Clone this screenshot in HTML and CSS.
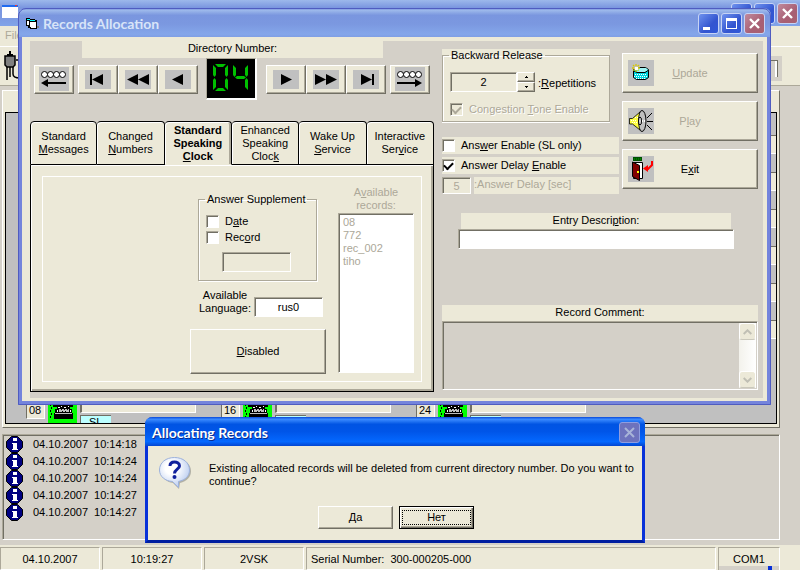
FILE: index.html
```html
<!DOCTYPE html>
<html lang="en">
<head>
<meta charset="utf-8">
<title>Records Allocation</title>
<link rel="stylesheet" href="styles.css">
</head>
<body>
<svg class="defs" aria-hidden="true">
  <defs>
    <symbol id="phone" viewBox="0 0 29 20">
      <path fill="#0f0" d="M0 0h29v20H0z"/>
      <path d="M7 0h15v2h3v2h-3v2h2v4h1v6H6v-6h1V6h2V4H5V2h2z"/>
      <path fill="#fff" d="M8 1h2v1H8zM12 0h1v2h-1zM15 0h1v2h-1zM19 1h2v1h-2zM10 4h2v1h-2zM13 3h1v1h-1zM16 4h2v1h-2zM20 3h1v1h-1zM9 7h1v2H9zM22 7h1v2h-1z"/>
      <path fill="#c0c0c0" d="M11 6h10v3H11zM7 10h17v1H7z"/>
      <path d="M13 6h1v1h-1zM16 6h1v1h-1zM19 6h1v1h-1zM14 8h1v1h-1zM17 8h1v1h-1zM2 1h1v2H2zM3 4h1v2H3zM2 7h1v2H2zM3 10h1v2H3zM2 13h1v2H2z"/>
    </symbol>
    <symbol id="info" viewBox="0 0 17 17">
      <path fill="#000080" stroke="#000" d="M5.500 .5h6l5 5v6l-5 5h-6l-5-5v-6z"/>
      <path fill="#fff" d="M7 2h4v3H7zM6 7h5v6h1v1H6v-1h1V8H6z"/>
    </symbol>
  </defs>
</svg>

<div class="desktop">
  <main class="app">
    <header class="app-title">
      <svg class="app-icon" width="16" height="14" viewBox="0 0 16 14"><path fill="#fff" d="M0 0h16v13H0z"/><path fill="#1f6bf0" d="M0 0h16v2H0z"/><path fill="#e33" d="M13 0h2v1h-2z"/></svg>
      <div class="caption-buttons">
        <button class="cap" aria-label="Minimize"></button>
        <button class="cap" aria-label="Restore"></button>
        <button class="cap close" aria-label="Close"><svg width="19" height="19" viewBox="0 0 19 19"><path stroke="#fff" stroke-width="2.400" d="M5 5l9 9M14 5l-9 9"/></svg></button>
      </div>
    </header>
    <nav class="menu"><a href="#">File</a></nav>
    <div class="toolbar">
      <svg width="18" height="32" viewBox="0 0 18 32"><path d="M7 1h2v3H7zM5 4h6v2H5z"/><path fill="#808080" stroke="#000" stroke-width="1.500" d="M3 6h10v9l-2 2H5l-2-2z"/><path fill="none" stroke="#000" stroke-width="1.500" d="M5 17v13M8 17v10M11 17v7c0 3 2 4 7 4M14 10h3v8"/></svg>
      <div class="tool-slot"></div>
    </div>
    <section class="board">
      <div class="board-inner">
        <div class="channels">
          <div class="channel"><span class="num">08</span><svg class="phone"><use href="#phone"/></svg><div class="lines"><i class="line"></i><b class="mode">SL</b></div></div>
          <div class="channel"><span class="num">16</span><svg class="phone"><use href="#phone"/></svg><div class="lines"><i class="line"></i><b class="mode"></b></div></div>
          <div class="channel"><span class="num">24</span><svg class="phone"><use href="#phone"/></svg><div class="lines"><i class="line"></i><b class="mode"></b></div></div>
        </div>
        <div class="slots"><i></i><i></i><i></i><i></i><i></i><i></i></div>
      </div>
    </section>
    <ul class="log">
      <li><svg><use href="#info"/></svg><span>04.10.2007</span><span>10:14:18</span></li>
      <li><svg><use href="#info"/></svg><span>04.10.2007</span><span>10:14:24</span></li>
      <li><svg><use href="#info"/></svg><span>04.10.2007</span><span>10:14:24</span></li>
      <li><svg><use href="#info"/></svg><span>04.10.2007</span><span>10:14:27</span></li>
      <li><svg><use href="#info"/></svg><span>04.10.2007</span><span>10:14:27</span></li>
    </ul>
    <footer class="status">
      <span>04.10.2007</span><span>10:19:27</span><span>2VSK</span>
      <span class="serial">Serial Number:&nbsp; 300-000205-000</span><span class="com">COM1</span>
    </footer>
  </main>

  <section class="window">
    <header class="win-title">
      <svg width="14" height="12" viewBox="0 0 14 12" shape-rendering="crispEdges"><path d="M0 0h4v1h5v1h2v9H4v-1H2V8H0z"/><path fill="#fff" d="M1 3h2v4H1zM4 4h6v6H5V9H4z"/><path fill="#0ff" d="M1 1h3v1H1zM4 2h5v1H4z"/><path fill="#808080" d="M11 8h2v2h-2z"/></svg>
      <h1>Records Allocation</h1>
      <div class="caption-buttons">
        <button class="cap" aria-label="Minimize"><svg width="19" height="19" viewBox="0 0 19 19"><path fill="#fff" d="M4 13h7v3H4z"/></svg></button>
        <button class="cap" aria-label="Maximize"><svg width="19" height="19" viewBox="0 0 19 19"><path fill="#fff" fill-rule="evenodd" d="M4 4h11v11H4zM5 7v7h9V7z"/></svg></button>
        <button class="cap close" aria-label="Close"><svg width="19" height="19" viewBox="0 0 19 19"><path stroke="#fff" stroke-width="2.400" d="M5 5l9 9M14 5l-9 9"/></svg></button>
      </div>
    </header>
    <div class="client">
      <div class="panel">
        <div class="left">
          <div class="dir-label">Directory Number:</div>
          <div class="nav">
            <button class="btn wide-ic" aria-label="Scroll back"><svg width="30" height="24" viewBox="0 0 30 24"><path fill="#c0c0c0" d="M0 0h30v24H0z"/><g fill="#fff" stroke="#000"><circle cx="5.500" cy="7.500" r="3"/><circle cx="11.500" cy="7.500" r="3"/><circle cx="17.500" cy="7.500" r="3"/><circle cx="23.500" cy="7.500" r="3"/></g><path d="M2 16l7-4v3h18v2H9v3z"/></svg></button>
            <div class="group">
              <button class="btn" aria-label="First"><svg width="26" height="19" viewBox="0 0 26 19"><path fill="#c0c0c0" d="M0 0h26v19H0z"/><path d="M5 4h2v11H5zM7 9.500L18 4v11z"/></svg></button>
              <button class="btn" aria-label="Fast back"><svg width="26" height="19" viewBox="0 0 26 19"><path fill="#c0c0c0" d="M0 0h26v19H0z"/><path d="M2 9.500L13 4v11zM13 9.500L24 4v11z"/></svg></button>
              <button class="btn" aria-label="Back"><svg width="26" height="19" viewBox="0 0 26 19"><path fill="#c0c0c0" d="M0 0h26v19H0z"/><path d="M7 9.500L18 4v11z"/></svg></button>
            </div>
            <div class="led" role="img" aria-label="04"><svg width="48" height="38" viewBox="0 0 48 38"><g fill="#00c000"><path d="M8 5h11l-3 3h-5zM6 6l3 3v7l-1.500 2L6 16zM21 6v10l-1.500 2-1.500-2V9zM6 21l1.500-2L9 21v7l-3 3zM21 21v10l-3-3v-7l1.500-2zM11 29h5l3 3H8zM26 6l3 3v7l-1.500 2-1.500-2zM41 6v10l-1.500 2-1.500-2V9zM30 17h7l2 1.500-2 1.500h-7l-2-1.500zM41 21v10l-3-3v-7l1.500-2z"/></g></svg></div>
            <div class="group">
              <button class="btn" aria-label="Forward"><svg width="26" height="19" viewBox="0 0 26 19"><path fill="#c0c0c0" d="M0 0h26v19H0z"/><path d="M19 9.500L8 4v11z"/></svg></button>
              <button class="btn" aria-label="Fast forward"><svg width="26" height="19" viewBox="0 0 26 19"><path fill="#c0c0c0" d="M0 0h26v19H0z"/><path d="M13 9.500L2 4v11zM24 9.500L13 4v11z"/></svg></button>
              <button class="btn" aria-label="Last"><svg width="26" height="19" viewBox="0 0 26 19"><path fill="#c0c0c0" d="M0 0h26v19H0z"/><path d="M19 4h2v11h-2zM19 9.500L8 4v11z"/></svg></button>
            </div>
            <button class="btn wide-ic" aria-label="Scroll forward"><svg width="30" height="24" viewBox="0 0 30 24"><path fill="#c0c0c0" d="M0 0h30v24H0z"/><g fill="#fff" stroke="#000"><circle cx="5.500" cy="7.500" r="3"/><circle cx="11.500" cy="7.500" r="3"/><circle cx="17.500" cy="7.500" r="3"/><circle cx="23.500" cy="7.500" r="3"/></g><path d="M27 16l-7-4v3H2v2h18v3z"/></svg></button>
          </div>
          <div class="tabs" role="tablist">
            <button class="tab" role="tab"><span>Standard<br><u>M</u>essages</span></button>
            <button class="tab" role="tab"><span>Changed<br><u>N</u>umbers</span></button>
            <button class="tab on" role="tab" aria-selected="true"><span>Standard<br>Speaking<br><u>C</u>lock</span></button>
            <button class="tab" role="tab"><span>Enhanced<br>Speaking<br>Cloc<u>k</u></span></button>
            <button class="tab" role="tab"><span>Wake Up<br><u>S</u>ervice</span></button>
            <button class="tab" role="tab"><span>Interactive<br>Ser<u>v</u>ice</span></button>
          </div>
          <div class="tab-body">
            <div class="tab-inner">
              <div class="supp-col">
                <fieldset class="supp">
                  <legend>Answer Supplement</legend>
                  <label class="check"><input type="checkbox"><span>D<u>a</u>te</span></label>
                  <label class="check"><input type="checkbox"><span>Rec<u>o</u>rd</span></label>
                  <input class="sunk off" type="text" aria-label="Record name" disabled>
                </fieldset>
                <div class="lang"><label for="lang">Available<br>Language:</label><input id="lang" class="sunk" type="text" value="rus0"></div>
                <button class="btn big"><span><u>D</u>isabled</span></button>
              </div>
              <div class="rec-col">
                <span class="rec-label" id="reclab">A<u>v</u>ailable<br>records:</span>
                <ul class="rec-list" aria-labelledby="reclab"><li>08</li><li>772</li><li>rec_002</li><li>tiho</li></ul>
              </div>
            </div>
          </div>
        </div>
        <div class="right">
          <div class="right-top">
            <div class="options">
              <div class="cream">
                <fieldset class="back">
                  <legend>Backward Release</legend>
                  <div class="rep"><input id="rep" class="sunk off" type="text" value="2"><div class="spin"><button class="btn" aria-label="Up"><svg width="5" height="3" viewBox="0 0 5 3"><path d="M2 0h1v1h1v1H1V1h1z"/></svg></button><button class="btn" aria-label="Down"><svg width="5" height="3" viewBox="0 0 5 3"><path d="M1 0h3v1H3v1H2V1H1z"/></svg></button></div><label for="rep">:<u>R</u>epetitions</label></div>
                  <label class="check dim"><input type="checkbox" checked disabled><span>Congestion <u>T</u>one Enable</span></label>
                </fieldset>
              </div>
              <div class="strips">
                <label class="check strip"><input type="checkbox"><span>Ans<u>w</u>er Enable (SL only)</span></label>
                <label class="check strip"><input type="checkbox" checked><span>Answer Delay <u>E</u>nable</span></label>
                <div class="delay"><input id="delay" class="sunk" type="text" value="5" disabled><label for="delay">:Answer Delay [sec]</label></div>
              </div>
            </div>
            <div class="actions">
              <button class="btn action" disabled><svg width="26" height="26" viewBox="0 0 26 26"><path fill="#c0c0c0" d="M0 0h26v26H0z"/><path fill="#00d8e0" stroke="#000" d="M5.500 9.500h3l3-2h6l3 2v8l-3 2h-9l-3-2z"/><path fill="#a0f4f4" d="M10 8h8l2 2-3 2H9z"/><path fill="none" stroke="#000" d="M6 11l3 1.500h8l3-2"/><path stroke="#fff" stroke-dasharray="1 1" d="M7 14.500h12M6 16.500h13M8 18.500h10"/><path stroke="#d8c800" stroke-width="1.300" stroke-dasharray="2 1" d="M8 4v9M4 8h9M5 5l6 6M11 5l-6 6"/><path fill="#fff" d="M7 7h3v3H7z"/></svg><span><u>U</u>pdate</span></button>
              <button class="btn action" disabled><svg width="26" height="26" viewBox="0 0 26 26"><path fill="#c0c0c0" d="M0 0h26v26H0z"/><ellipse cx="14" cy="13" rx="4" ry="10.500" fill="#c0c0c0" stroke="#000"/><path fill="#ffff40" stroke="#000" stroke-width=".8" d="M1.500 10.500h3L12 4c-2 5-2 12 0 18l-7.500-6h-3z"/><path stroke="#fff" stroke-dasharray="1 1" d="M3 12.500h6M4 14.500h6M7 9.500h4"/><ellipse cx="12" cy="13" rx="1.500" ry="4" fill="#ddd" stroke="#000"/><path stroke="#fff" stroke-width="2" stroke-dasharray="1 1" d="M14 13h4"/><path stroke="#000" d="M19 10l5-5M19 13.500h6M19 17l5 5"/></svg><span>P<u>l</u>ay</span></button>
              <button class="btn action"><svg width="26" height="26" viewBox="0 0 26 26"><path fill="#c0c0c0" d="M0 0h26v26H0z"/><path fill="#005000" d="M5 1h9v4H5z"/><path stroke="#00b000" stroke-dasharray="1 1" d="M6 3h7"/><path fill="#fff" stroke="#000" d="M5.500 6.500h9v16h-9z"/><path fill="#800000" stroke="#000" d="M4.500 6l7 3.500v15l-7-4z"/><path fill="#ff0" d="M9 15h2v2H9z"/><path fill="none" stroke="#f00" stroke-width="2" d="M24 5v4l-4 4h-2"/><path fill="#f00" d="M15 12.500l5-3.500v7z"/></svg><span>E<u>x</u>it</span></button>
            </div>
          </div>
          <div class="entry"><label for="entry">Entry Descri<u>p</u>tion:</label><input id="entry" class="sunk" type="text"></div>
          <div class="comment">
            <label for="comment">Record Comment:</label>
            <div class="comment-box">
              <textarea id="comment" disabled></textarea>
              <div class="scroll"><button disabled aria-label="Scroll up"><svg width="9" height="6" viewBox="0 0 9 6"><path fill="none" stroke="#c0bfb4" stroke-width="2" d="M.7 5L4.500 1.300 8.300 5"/></svg></button><button disabled aria-label="Scroll down"><svg width="9" height="6" viewBox="0 0 9 6"><path fill="none" stroke="#c0bfb4" stroke-width="2" d="M.7 1L4.500 4.700 8.300 1"/></svg></button></div>
            </div>
          </div>
        </div>
      </div>
    </div>
  </section>

  <section class="dialog" role="dialog" aria-labelledby="dlg">
    <header class="dlg-title"><h2 id="dlg">Allocating Records</h2><button class="cap gone" aria-label="Close" disabled><svg width="19" height="19" viewBox="0 0 19 19"><path stroke="#a9b4d8" stroke-width="2" d="M5 5l9 9M14 5l-9 9"/></svg></button></header>
    <div class="dlg-body">
      <div class="dlg-msg">
        <svg width="34" height="34" viewBox="0 0 34 34"><defs><radialGradient id="b" cx=".4" cy=".35" r=".7"><stop offset=".3" stop-color="#fff"/><stop offset="1" stop-color="#b4c8ee"/></radialGradient></defs><path fill="#8a8a84" opacity=".6" d="M18 3c9 0 15 5 15 12 0 6-4 10-11 12l-1 6-6-6C8 26 4 22 4 15 4 8 10 3 18 3z"/><path fill="url(#b)" stroke="#9db2dc" d="M16.500 1.500c8.500 0 15 5 15 12.500 0 6-4 10-11 11.500v6l-6-6C7 25 1.500 20.500 1.500 14c0-7.500 6.500-12.500 15-12.500z"/><path fill="none" stroke="#10209c" stroke-width="3" d="M12 10c0-3 2-4 4.500-4s5 1.300 5 4c0 3-5 3.500-5 7.500"/><circle cx="16.500" cy="21" r="2" fill="#10209c"/></svg>
        <p>Existing allocated records will be deleted from current directory number. Do you want to continue?</p>
      </div>
      <div class="dlg-buttons"><button class="btn">Да</button><button class="btn default"><span>Нет</span></button></div>
    </div>
  </section>
</div>
</body>
</html>
```
FILE: styles.css
```css
* { box-sizing: border-box; }
body, h1, h2, p, ul, fieldset { margin: 0; padding: 0; }
body, button, input, textarea {
  font: 11px/13px "Liberation Sans", sans-serif;
  color: #000;
}
ul { list-style: none; }
svg { display: block; flex: none; }
button { padding: 0; border: 0; background: none; }
u { text-underline-offset: 1px; }
.defs { position: absolute; width: 0; height: 0; }

.desktop { position: relative; min-height: 100vh; overflow: hidden; }

/* Main application behind */
.app { min-height: 100vh; display: flex; flex-direction: column; background: #d4d0c8; }
.app-title {
  height: 26px; padding: 3px 2px 0; display: flex; justify-content: space-between;
  background: linear-gradient(#9db9eb, #7a96df 30%, #7b98e2 60%, #82a4e8);
}
.app-icon { margin-top: 2px; }
.menu { height: 20px; padding: 3px 5px; background: #ece9d8; }
.menu a { color: #aca899; text-decoration: none; }
.toolbar {
  height: 40px; padding: 3px 18px 0 2px; display: flex; justify-content: space-between;
  background: #ece9d8; border-top: 1px solid #fff; border-bottom: 1px solid #aca899;
}
.tool-slot { width: 40px; height: 25px; margin-top: 6px; border: 4px solid #d4d0c8; background: #d4d0c8; box-shadow: inset -1px 1px #716f64, inset -3px 0 #fff; }
.board {
  flex: 1; margin: 4px 20px 6px 2px; padding: 21px 2px 3px 2px; display: flex;
  background: #ece9d8; border: 1px solid #fff; border-right-color: #716f64; border-bottom-color: #716f64;
}
.board-inner { flex: 1; display: flex; justify-content: space-between; border: 1px solid #000; background: #c0c0c0; overflow: hidden; }
.channels { display: flex; align-items: flex-end; padding-left: 20px; }
.channel { width: 195px; display: flex; align-items: flex-start; gap: 3px; }
.num { width: 19px; height: 16px; padding: 0 2px; background: #ece9d8; border: 1px solid #716f64; border-color: #c0c0c0 #fff #fff #716f64; }
.phone { width: 29px; height: 20px; }
.lines { display: flex; flex-direction: column; gap: 2px; }
.line { width: 116px; height: 10px; background: #ece9d8; border: 1px solid #fff; border-left: 2px solid #716f64; }
.mode { width: 31px; height: 8px; padding-left: 8px; overflow: hidden; font-weight: normal; background: #bff; border-top: 1px solid #716f64; border-left: 1px solid #716f64; }
.slots { width: 6px; padding-top: 22px; display: flex; flex-direction: column; gap: 18px; }
.slots i { height: 19px; background: #ece9d8; border-top: 1px solid #716f64; border-bottom: 1px solid #fff; }
.log {
  height: 106px; margin: 0 20px 5px 2px; padding: 1px 3px;
  border: 1px solid #aca899; border-color: #aca899 #fff #fff #aca899; box-shadow: inset 1px 1px #716f64;
}
.log li { height: 17px; display: flex; align-items: center; gap: 6px; }
.log svg { width: 17px; height: 17px; margin-right: 4px; }
.status { height: 25px; display: flex; gap: 2px; padding: 2px 20px 0 0; background: #ece9d8; }
.status span { width: 100px; padding-top: 5px; text-align: center; border: 1px solid #aca899; border-right-color: #fff; border-bottom-color: #fff; }
.status .serial { flex: 1; padding-left: 4px; text-align: left; }
.status .com {
  width: 62px; border-bottom: 0;
  background: linear-gradient(#0831d9, #0831d9) 49px 100% / 4px 4px no-repeat, linear-gradient(#d4d0c8, #d4d0c8) 0 100% / 100% 4px no-repeat;
}

/* Caption buttons */
.caption-buttons { display: flex; gap: 2px; }
.cap {
  width: 21px; height: 21px; border: 1px solid #c6d3f5; border-radius: 3px;
  background: linear-gradient(135deg, #6f92ee, #3355d0 60%, #2f58d8);
}
.close { background: linear-gradient(135deg, #c08a9c, #a85f74 60%, #a86070); }

/* Classic raised and sunken controls */
.btn {
  display: flex; align-items: center; justify-content: center; background: #ece9d8;
  border: 1px solid #fff; border-right-color: #716f64; border-bottom-color: #716f64;
  box-shadow: inset -1px -1px #aca899;
}
.sunk {
  height: 20px; padding: 0 2px; text-align: center; background: #fff; border: 1px solid #aca899;
  border-right-color: #fff; border-bottom-color: #fff; border-radius: 0; box-shadow: inset 1px 1px #716f64; outline: 0;
}
.off { background: #ece9d8; }
.sunk:disabled { color: #aca899; background: #ece9d8; }
.check { display: flex; align-items: center; gap: 6px; }
.check input {
  appearance: none; width: 13px; height: 13px; margin: 0; background: #fff;
  border: 1px solid #aca899; border-right-color: #fff; border-bottom-color: #fff; box-shadow: inset 1px 1px #716f64;
  display: grid; place-items: center;
}
.check input:checked::before {
  content: ""; width: 7px; height: 4px; margin-top: -2px; border: solid #000; border-width: 0 0 2px 2px; transform: rotate(-45deg);
}
.check input:disabled { background: #ece9d8; }
.check input:disabled::before { border-color: #aca899; }

/* Records Allocation window */
.window {
  position: absolute; left: 18px; right: 29px; top: 8px; border: solid #7484dc; border-width: 0 4px 4px;
  border-radius: 8px 8px 0 0; background: #ece9d8;
  outline: 1px solid #4f5cc0; outline-offset: -1px;
}
.win-title {
  height: 29px; margin: 0 -4px; padding: 5px 6px 0 8px; display: flex; align-items: flex-start; border-radius: 7px 7px 0 0;
  background: linear-gradient(#6b84d8, #9db9eb 8%, #7a96df 25%, #7b98e0 55%, #84a6ea 90%, #7f9ee4);
}
.win-title > svg { margin: 5px 3px 0 0; }
.win-title h1 { flex: 1; font: bold 14px/22px Lato, sans-serif; color: #d8e4f8; }
.client { padding: 4px 4px 3px 8px; }
.panel { display: grid; grid-template-columns: 404px 1fr; background: #d4d0c8; padding-bottom: 6px; }
.dir-label { height: 17px; margin: 0 51px 0 52px; padding-top: 1px; text-align: center; background: #ece9d8; }
.nav { display: flex; align-items: center; gap: 4px; padding: 0 4px; margin-bottom: 21px; }
.nav .btn { width: 40px; height: 29px; }
.group { display: flex; }
.led { width: 51px; height: 42px; margin: 0 5px 0 4px; background: #000; border: 1px solid #aca899; border-right: 2px solid #fff; border-bottom: 2px solid #fff; }

.tabs { display: grid; grid-template-columns: repeat(6, 1fr); }
.tab {
  height: 44px; background: #ece9d8; border: 1px solid #000; border-width: 1px 1px 1px 0; border-radius: 4px 4px 0 0;
  box-shadow: inset 1px 1px #fff; text-align: center; display: flex; align-items: center; justify-content: center;
}
.tab:first-child { border-left-width: 1px; }
.tab.on { font-weight: bold; border-bottom-color: #ece9d8; box-shadow: inset 1px 1px #fff, inset -2px 0 #aca899; }
.tab-body {
  height: 227px; padding: 11px 11px 9px; background: #ece9d8; border: 1px solid #000; border-top: 0;
  box-shadow: inset 1px 1px #fff, inset -2px -2px #aca899;
}
.tab-inner { height: 206px; padding: 9px 7px 0; display: flex; justify-content: flex-end; gap: 12px; border: 1px solid #fff; }
.supp-col { width: 136px; padding-top: 7px; display: flex; flex-direction: column; }
.supp { width: 119px; margin-left: 8px; padding: 7px 7px 8px; border: 1px solid #aca899; box-shadow: 1px 1px #fff, inset 1px 1px #fff; }
.supp legend { margin: 0 0 0 -1px; padding: 0 2px; white-space: nowrap; }
.supp .check { height: 16px; }
.supp .sunk { display: block; width: 69px; margin: 7px 0 0 16px; }
.lang { display: flex; align-items: flex-end; justify-content: flex-end; gap: 3px; margin: 8px 3px 12px 0; text-align: center; }
.lang label { padding-bottom: 2px; }
.lang .sunk { width: 69px; }
.big { height: 45px; }
.rec-col { width: 76px; display: flex; flex-direction: column; text-align: center; color: #aca899; }
.rec-list { height: 160px; margin-top: 1px; padding: 2px 4px; text-align: left; background: #fff; border: 1px solid #aca899; border-color: #aca899 #fff #fff #aca899; box-shadow: inset 1px 1px #716f64; }

.right { padding: 8px 5px 0 8px; display: flex; flex-direction: column; }
.right-top { display: grid; grid-template-columns: 177px 1fr; gap: 3px; }
.cream { width: 168px; padding-bottom: 1px; background: #ece9d8; }
.back { padding: 10px 7px 5px; border: 1px solid #aca899; box-shadow: inset 1px 1px #fff, 0 1px #fff; }
.back legend { margin-left: -1px; padding: 0 2px; }
.rep { display: flex; align-items: center; }
.rep .sunk { width: 67px; }
.rep label { padding: 2px 0 0 3px; }
.spin .btn { width: 18px; height: 10px; }
.back .check { margin-top: 11px; }
.dim { color: #aca899; text-shadow: 1px 1px #fff; }
.strips { margin-top: 14px; display: flex; flex-direction: column; gap: 3px; }
.strip { height: 17px; background: #ece9d8; }
.delay { display: flex; gap: 3px; color: #aca899; }
.delay .sunk { width: 29px; height: 17px; }
.delay label { flex: 1; padding-top: 1px; background: #ece9d8; }
.actions { padding-top: 4px; display: flex; flex-direction: column; gap: 8px; }
.action { height: 40px; padding: 0 5px; justify-content: flex-start; }
.action span { flex: 1; padding-right: 26px; text-align: center; }
.action:disabled { color: #aca899; }
.entry { margin: 19px 24px 0 16px; display: flex; flex-direction: column; }
.entry label { margin: 0 3px; height: 16px; padding-top: 1px; text-align: center; background: #ece9d8; }
.comment { margin-top: 56px; text-align: center; }
.comment > label { display: block; height: 16px; padding-top: 1px; background: #ece9d8; }
.comment-box { display: flex; height: 69px; padding: 1px; border: 1px solid #aca899; border-color: #aca899 #fff #fff #aca899; box-shadow: inset 1px 1px #716f64; }
textarea { flex: 1; border: 0; padding: 2px; resize: none; background: transparent; }
.scroll { width: 17px; display: flex; flex-direction: column; justify-content: space-between; background: linear-gradient(90deg, #f3f2ec, #fff); }
.scroll button { height: 17px; display: grid; place-items: center; background: #ece9d8; border: 1px solid #fff; border-bottom-color: #cac8bb; border-radius: 3px; }

/* Message box */
.dialog {
  position: absolute; left: 145px; top: 417px; width: 500px; border: 3px solid #0831d9; border-top: 0; border-bottom-color: #001ea0;
  border-radius: 8px 8px 0 0; background: #ece9d8;
}
.dlg-title {
  height: 29px; margin: 0 -3px; padding: 5px 5px 0 7px; display: flex; justify-content: space-between; border-radius: 7px 7px 0 0;
  background: linear-gradient(#0a48d8, #3b8bff 8%, #0054e3 25%, #0055e8 50%, #0468ff 85%, #0345d0);
}
.dlg-title h2 { font: bold 14px/22px Lato, sans-serif; color: #fff; text-shadow: 1px 1px #0a2a8c; }
.gone { border-color: #8f9de0; background: #6d72bd; }
.dlg-body { padding: 10px 2px 11px 10px; }
.dlg-msg { display: flex; gap: 17px; }
.dlg-msg p { padding-top: 6px; }
.dlg-buttons { display: flex; justify-content: center; gap: 6px; margin-top: 16px; padding-right: 6px; }
.dlg-buttons .btn { width: 75px; height: 23px; }
.dlg-buttons .default { padding: 2px; border: 1px solid #000; box-shadow: inset 1px 1px #fff, inset -1px -1px #716f64, inset -2px -2px #aca899; }
.default span { flex: 1; border: 1px dotted #000; }
```
